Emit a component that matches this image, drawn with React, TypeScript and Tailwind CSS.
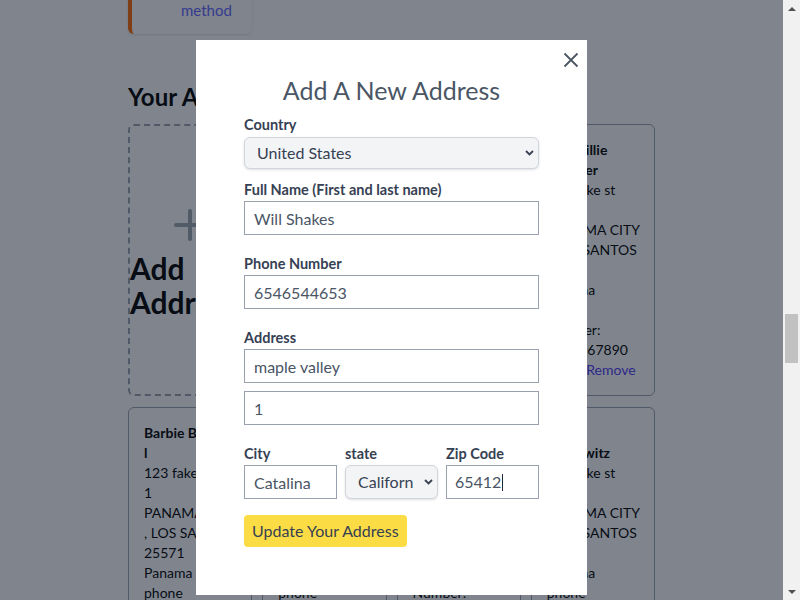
import React from "react";

type Line = { t: string; b?: boolean; link?: boolean };

const addr = (name: string[]): Line[] => [
  ...name.map((t) => ({ t, b: true })),
  { t: "123 fake st" },
  { t: "1" },
  { t: "PANAMA CITY" },
  { t: ", LOS SANTOS" },
  { t: "25571" },
  { t: "Panama" },
  { t: "phone" },
  { t: "Number:" },
  { t: "1234567890" },
  { t: "Edit | Remove", link: true },
];

function AddrCard({ lines }: { lines: Line[] }) {
  return (
    <div className="overflow-hidden rounded-md border border-gray-400 bg-white p-[15px] text-[14px] leading-5 text-black">
      {lines.map((l, i) =>
        l.link ? (
          <div key={i} className="whitespace-nowrap text-indigo-600">
            Edit<span className="mx-[6px]">|</span>Remove
          </div>
        ) : (
          <div key={i} className={"whitespace-nowrap " + (l.b ? "font-bold" : "")}>
            {l.t}
          </div>
        )
      )}
    </div>
  );
}

function Chevron() {
  return (
    <svg
      className="pointer-events-none absolute right-[5px] top-1/2 -translate-y-1/2"
      width="9"
      height="6"
      viewBox="0 0 9 6"
    >
      <path d="M1 1l3.5 3.5L8 1" fill="none" stroke="#374151" strokeWidth="1.8" />
    </svg>
  );
}

function Label({ children, className }: { children: React.ReactNode; className: string }) {
  return (
    <label className={"block text-[14.5px] font-bold leading-5 text-gray-700 " + className}>
      {children}
    </label>
  );
}

function TextInput({ value, className }: { value: string; className: string }) {
  return (
    <input
      readOnly
      value={value}
      className={
        "block h-[34px] w-full border border-gray-400 bg-white pl-[9px] text-[16px] text-gray-600 outline-none " +
        className
      }
    />
  );
}

export default function App() {
  return (
    <div className="flex h-[600px] w-[800px] overflow-hidden font-['Lato',sans-serif]">
      <div className="relative flex-1 overflow-hidden bg-white">
        {/* page content (scrolled) */}
        <div className="mx-auto flex w-[527px] flex-col">
          <div className="-mt-[26px] h-[60px] w-[124px] rounded-md border-l-4 border-orange-500 bg-white pl-[49px] pt-[6px] text-[15px] leading-5 text-indigo-500 shadow">
            <div>payment</div>
            <div>method</div>
          </div>
          <h2 className="mt-[47px] text-2xl font-bold leading-8 text-black">Your Addresses</h2>
          <div className="mt-[11px] grid grid-cols-4 gap-x-[10px] gap-y-[11px]">
            <div className="flex flex-col items-center justify-center rounded-md border-2 border-dashed border-gray-400 bg-white pt-[7px]">
              <svg width="32" height="32" viewBox="0 0 32 32">
                <path d="M16 2v28M2 16h28" stroke="#9ca3af" strokeWidth="4" strokeLinecap="round" />
              </svg>
              <div className="mt-[10px] w-full text-[30px] font-bold leading-[34px] text-black">
                Add Address
              </div>
            </div>
            <AddrCard lines={addr(["John", "Smithson"])} />
            <AddrCard lines={addr(["Mary", "Johnson"])} />
            <AddrCard lines={addr(["Mr. Willie", "Fletcher"])} />
            <AddrCard lines={addr(["Barbie Bel", "l"])} />
            <AddrCard lines={addr(["Peter", "Parkerson"])} />
            <AddrCard lines={addr(["Ken Doll"])} />
            <AddrCard lines={addr(["Sam", "Berkowitz"])} />
          </div>
        </div>

        {/* overlay */}
        <div className="absolute inset-0 bg-gray-900/[0.53]" />

        {/* modal */}
        <div className="absolute inset-0 flex justify-center">
          <div className="relative mt-[40px] h-[555px] w-[391px] bg-white px-12 pt-[34px]">
            <button className="absolute right-[8px] top-[12px]" aria-label="Close">
              <svg width="16" height="16" viewBox="0 0 16 16">
                <path d="M1.5 1.5l13 13M14.5 1.5l-13 13" stroke="#4b5563" strokeWidth="1.8" />
              </svg>
            </button>
            <h2 className="text-center text-[25px] font-normal leading-8 text-gray-600">
              Add A New Address
            </h2>

            <Label className="mt-[9px]">Country</Label>
            <div className="relative mt-0.5">
              <select
                defaultValue="US"
                className="block h-8 w-full appearance-none rounded-md border border-gray-300 bg-gray-100 pl-3 text-[16px] text-gray-700 shadow-sm outline-none"
              >
                <option value="US">United States</option>
              </select>
              <Chevron />
            </div>

            <Label className="mt-[11px]">Full Name (First and last name)</Label>
            <TextInput value="Will Shakes" className="mt-px" />

            <Label className="mt-[19px]">Phone Number</Label>
            <TextInput value="6546544653" className="mt-px" />

            <Label className="mt-[19px]">Address</Label>
            <TextInput value="maple valley" className="mt-px" />
            <TextInput value="1" className="mt-2" />

            <div className="mt-[19px] grid grid-cols-3 gap-2">
              <div>
                <Label className="">City</Label>
                <TextInput value="Catalina" className="mt-px" />
              </div>
              <div>
                <Label className="">state</Label>
                <div className="relative mt-px">
                  <select
                    defaultValue="CA"
                    className="block h-[34px] w-full appearance-none rounded-md border border-gray-300 bg-gray-100 pl-3 pr-6 text-[16px] text-gray-700 shadow-sm outline-none"
                  >
                    <option value="CA">California</option>
                  </select>
                  <Chevron />
                </div>
              </div>
              <div>
                <Label className="">Zip Code</Label>
                <div className="mt-px flex h-[34px] items-center border border-gray-400 bg-white pl-[8px] text-[16px] text-gray-600">
                  65412
                  <span className="ml-px inline-block h-[17px] w-px bg-gray-800" />
                </div>
              </div>
            </div>

            <button className="mt-4 h-8 rounded bg-[#fcdc45] px-2 text-[16px] text-gray-700">
              Update Your Address
            </button>
          </div>
        </div>
      </div>

      {/* scrollbar */}
      <div className="flex w-[17px] flex-col bg-[#f1f1f1]">
        <div className="flex h-[17px] items-center justify-center">
          <svg width="8" height="4" viewBox="0 0 8 4">
            <path d="M0 4L4 0L8 4z" fill="#505050" />
          </svg>
        </div>
        <div className="flex-1 px-[2px]">
          <div className="mt-[297px] h-[49px] w-full bg-[#c1c1c1]" />
        </div>
        <div className="flex h-[17px] items-center justify-center">
          <svg width="8" height="4" viewBox="0 0 8 4">
            <path d="M0 0L4 4L8 0z" fill="#505050" />
          </svg>
        </div>
      </div>
    </div>
  );
}
